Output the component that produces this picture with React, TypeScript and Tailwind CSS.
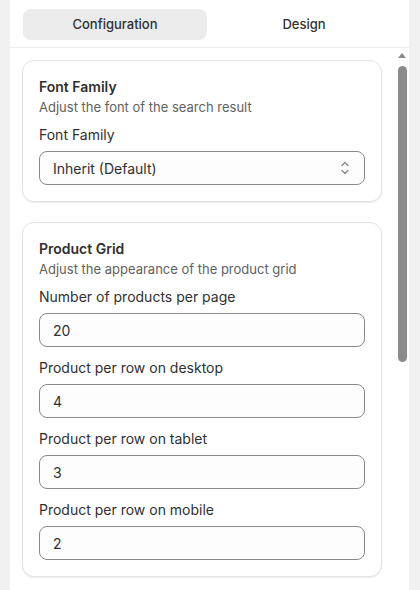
import { ReactNode } from "react";

interface FieldProps {
  label: string;
  children: ReactNode;
}

const Field = ({ label, children }: FieldProps) => {
  return (
    <div className="flex flex-col">
      <label className="mb-[6px] text-[14px] leading-5 text-[#303030]">{label}</label>
      {children}
    </div>
  );
};

const TextInput = ({ value }: { value: string }) => {
  return (
    <div className="flex h-[34px] items-center rounded-lg border border-[#8a8a8a] bg-[#fdfdfd] px-[13px] text-[14px] text-[#303030]">
      {value}
    </div>
  );
};

interface CardProps {
  title: string;
  subtitle: string;
  children: ReactNode;
}

const SettingsCard = ({ title, subtitle, children }: CardProps) => {
  return (
    <section className="rounded-xl border border-[#e3e3e3] bg-white p-4 shadow-[0_1px_1px_rgba(0,0,0,0.08)]">
      <h3 className="text-[14px] font-semibold leading-5 text-[#303030]">{title}</h3>
      <p className="text-[13px] leading-5 text-[#616161]">{subtitle}</p>
      <div className="mt-2 flex flex-col gap-[11px]">{children}</div>
    </section>
  );
};

const SelectIcon = () => (
  <svg width="10" height="16" viewBox="0 0 10 16" fill="none">
    <path
      d="M2 5.5 5 2.5l3 3M2 10.5l3 3 3-3"
      stroke="#8a8a8a"
      strokeWidth="1.4"
      strokeLinecap="round"
      strokeLinejoin="round"
    />
  </svg>
);

export default function App() {
  return (
    <div
      className="min-h-screen bg-[#f1f1f1] pl-[10px] pr-[11px]"
      style={{ fontFamily: "Inter, 'Liberation Sans', sans-serif" }}
    >
      <div className="flex h-[590px] flex-col bg-white">
        {/* tabs */}
        <div className="grid h-[48px] grid-cols-2 gap-[5px] border-b border-[#ebebeb] px-[13px] pt-[9px]">
          <button className="h-[31px] rounded-lg bg-[#ebebeb] text-[13px] font-medium text-[#303030]">
            Configuration
          </button>
          <button className="h-[31px] rounded-lg text-[13px] font-medium text-[#303030]">
            Design
          </button>
        </div>

        <div className="flex flex-1 overflow-hidden">
          <div className="flex flex-1 flex-col gap-[20px] pl-[12px] pr-[13px] pt-[12px]">
            <SettingsCard title="Font Family" subtitle="Adjust the font of the search result">
              <Field label="Font Family">
                <div className="flex h-[34px] items-center justify-between rounded-lg border border-[#8a8a8a] bg-[#fdfdfd] pl-[13px] pr-[14px] text-[14px] text-[#303030]">
                  <span>Inherit (Default)</span>
                  <SelectIcon />
                </div>
              </Field>
            </SettingsCard>

            <SettingsCard
              title="Product Grid"
              subtitle="Adjust the appearance of the product grid"
            >
              <Field label="Number of products per page">
                <TextInput value="20" />
              </Field>
              <Field label="Product per row on desktop">
                <TextInput value="4" />
              </Field>
              <Field label="Product per row on tablet">
                <TextInput value="3" />
              </Field>
              <Field label="Product per row on mobile">
                <TextInput value="2" />
              </Field>
            </SettingsCard>
          </div>

          {/* scrollbar */}
          <div className="flex w-[14px] flex-col items-center pt-[5px]">
            <svg width="8" height="5" viewBox="0 0 8 5">
              <path d="M4 0 8 5H0Z" fill="#8b8b8b" />
            </svg>
            <div className="mt-[8px] h-[296px] w-[9px] rounded-full bg-[#8b8b8b]" />
          </div>
        </div>
      </div>
    </div>
  );
}
